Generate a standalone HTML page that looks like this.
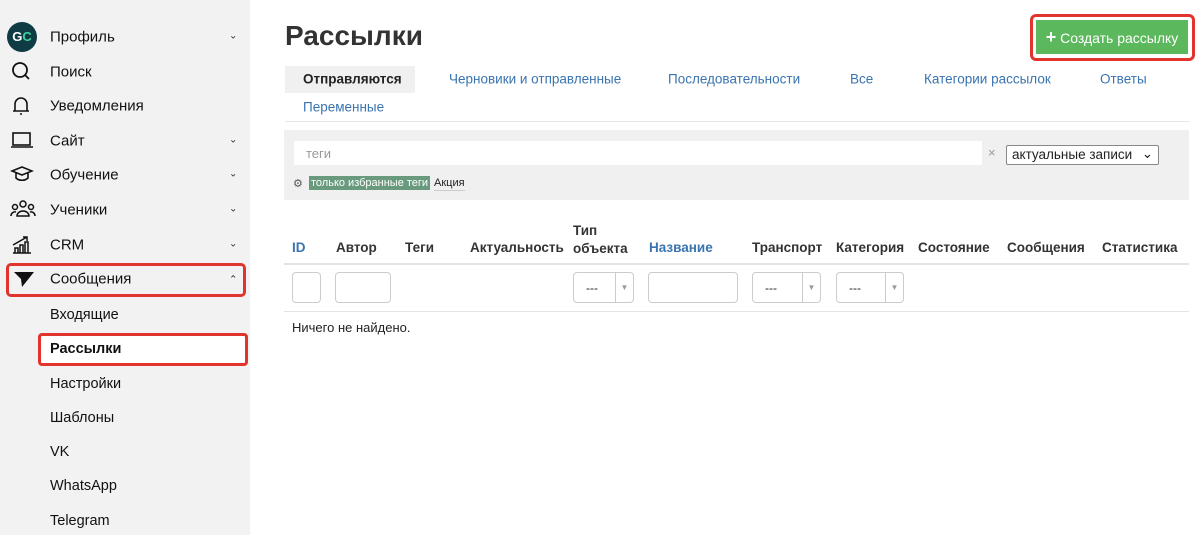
<!DOCTYPE html>
<html><head><meta charset="utf-8"><style>
*{box-sizing:border-box;margin:0;padding:0}
body{width:1200px;height:535px;overflow:hidden;font-family:"Liberation Sans",sans-serif;background:#fff;position:relative;color:#222}
.sb{position:absolute;left:0;top:0;width:250px;height:535px;background:#f2f2f2}
.it{position:absolute;left:50px;font-size:15px;color:#111;transform:translateY(-45%)}
.ic{position:absolute;left:10px;transform:translateY(-50%)}
.ch{position:absolute;left:229px;font-size:10px;color:#333;transform:translateY(-50%)}
.sub{position:absolute;left:50px;font-size:14.5px;color:#111;transform:translateY(-45%)}
.a{position:absolute;white-space:nowrap}
.tab{position:absolute;font-size:13.5px;color:#3a74b0;transform:translateY(-50%)}
.th{position:absolute;font-size:13.5px;font-weight:bold;color:#333;top:240px}
.inp{position:absolute;top:272px;height:31px;border:1px solid #ccc;border-radius:4px;background:#fff}
.sel{position:absolute;top:272px;height:31px;border:1px solid #ccc;border-radius:4px;background:#fff;font-size:12px}
.sel span{position:absolute;left:12px;top:8px}
.sel i{position:absolute;right:0;top:0;width:18px;height:29px;border-left:1px solid #ccc;font-style:normal;color:#999;font-size:8px;text-align:center;line-height:29px}
</style></head><body>
<div class="sb">
<div style="position:absolute;left:7px;top:22px;width:30px;height:30px;border-radius:50%;background:#0f3b44;color:#fff;font-weight:bold;font-size:13px;line-height:30px;text-align:center">G<span style="color:#3fd0a0">C</span></div>
<div class="it" style="top:36px">Профиль</div><div class="ch" style="top:36px">⌄</div>
<svg class="ic" style="top:71px" width="22" height="22" viewBox="0 0 22 22"><circle cx="10" cy="10" r="7" fill="none" stroke="#111" stroke-width="1.8"/><path d="M15 15l4 4" stroke="#111" stroke-width="1.8"/></svg>
<div class="it" style="top:71px">Поиск</div>
<svg class="ic" style="top:105px" width="22" height="22" viewBox="0 0 22 22"><path d="M5 17V10a6 6 0 0 1 12 0v7M3 17h16M10 20h2" fill="none" stroke="#111" stroke-width="1.6"/></svg>
<div class="it" style="top:105px">Уведомления</div>
<svg class="ic" style="top:140px" width="24" height="22" viewBox="0 0 24 22"><rect x="3" y="4" width="17" height="12" fill="none" stroke="#111" stroke-width="1.6"/><path d="M1 18h22" stroke="#111" stroke-width="1.6"/></svg>
<div class="it" style="top:140px">Сайт</div><div class="ch" style="top:140px">⌄</div>
<svg class="ic" style="top:174px" width="24" height="22" viewBox="0 0 24 22"><path d="M2 8l10-4 10 4-10 4zM6 10v5c3 3 9 3 12 0v-5" fill="none" stroke="#111" stroke-width="1.6"/></svg>
<div class="it" style="top:174px">Обучение</div><div class="ch" style="top:174px">⌄</div>
<svg class="ic" style="top:209px" width="26" height="22" viewBox="0 0 26 22"><circle cx="13" cy="6" r="3" fill="none" stroke="#111" stroke-width="1.5"/><circle cx="5" cy="9" r="2.5" fill="none" stroke="#111" stroke-width="1.5"/><circle cx="21" cy="9" r="2.5" fill="none" stroke="#111" stroke-width="1.5"/><path d="M7 18a6 5 0 0 1 12 0zM1 18a4 4 0 0 1 5-4M25 18a4 4 0 0 0-5-4" fill="none" stroke="#111" stroke-width="1.5"/></svg>
<div class="it" style="top:209px">Ученики</div><div class="ch" style="top:209px">⌄</div>
<svg class="ic" style="top:244px" width="24" height="22" viewBox="0 0 24 22"><path d="M3 20h18M5 20v-5h3v5M10 20v-8h3v8M15 20v-11h3v11M3 12l14-8M13 4h4v4" fill="none" stroke="#111" stroke-width="1.5"/></svg>
<div class="it" style="top:244px">CRM</div><div class="ch" style="top:244px">⌄</div>
<div style="position:absolute;left:6px;top:263px;width:240px;height:34px;border:3px solid #e0342c;border-radius:5px"></div>
<svg class="ic" style="top:279px;left:13px" width="22" height="20" viewBox="0 0 22 20"><path d="M1 3h20L9 18 8 10z" fill="#111"/></svg>
<div class="it" style="top:278px">Сообщения</div><div class="ch" style="top:280px">⌃</div>
<div class="sub" style="top:314px">Входящие</div>
<div style="position:absolute;left:38px;top:333px;width:210px;height:33px;border:3px solid #e0342c;border-radius:4px;background:#fff"></div>
<div class="sub" style="top:348px;font-weight:bold">Рассылки</div>
<div class="sub" style="top:383px">Настройки</div>
<div class="sub" style="top:417px">Шаблоны</div>
<div class="sub" style="top:451px">VK</div>
<div class="sub" style="top:485px">WhatsApp</div>
<div class="sub" style="top:520px">Telegram</div>
</div>

<div class="a" style="left:285px;top:20px;font-size:28px;font-weight:bold;color:#333">Рассылки</div>
<div class="a" style="left:1030px;top:14px;width:165px;height:47px;border:3px solid #e0342c;border-radius:6px"></div>
<div class="a" style="left:1036px;top:20px;width:152px;height:34px;background:#5cb85c;color:#fff;font-size:14px;line-height:34px;text-align:center"><b style="font-size:18px">+</b> Создать рассылку</div>

<div class="a" style="left:285px;top:66px;width:130px;height:27px;background:#f0f0f0"></div>
<div class="tab" style="left:303px;top:79px;color:#222;font-weight:bold">Отправляются</div>
<div class="tab" style="left:449px;top:79px">Черновики и отправленные</div>
<div class="tab" style="left:668px;top:79px">Последовательности</div>
<div class="tab" style="left:850px;top:79px">Все</div>
<div class="tab" style="left:924px;top:79px">Категории рассылок</div>
<div class="tab" style="left:1100px;top:79px">Ответы</div>
<div class="tab" style="left:303px;top:107px">Переменные</div>
<div class="a" style="left:285px;top:121px;width:905px;height:1px;background:#e8e8e8"></div>

<div class="a" style="left:284px;top:130px;width:905px;height:70px;background:#f0f0f0"></div>
<div class="a" style="left:294px;top:141px;width:688px;height:24px;background:#fff;font-size:13px;color:#999;padding:5px 12px">теги</div>
<div class="a" style="left:988px;top:145px;font-size:13px;color:#999">×</div>
<div class="a" style="left:1006px;top:145px;width:153px;height:20px;background:#fff;border:1px solid #888;border-radius:2px;font-size:13.5px;padding:1px 5px">актуальные записи<span style="position:absolute;right:5px;top:0">⌄</span></div>
<div class="a" style="left:293px;top:177px;font-size:11px;color:#555">⚙</div>
<div class="a" style="left:309px;top:176px;background:#6a9a7e;color:#fff;font-size:11px;padding:0 2px;height:14px;line-height:14px">только избранные теги</div>
<div class="a" style="left:434px;top:176px;font-size:11px;color:#222;border-bottom:1px solid #ccc;line-height:14px">Акция</div>

<div class="th" style="left:292px;color:#3a74b0">ID</div>
<div class="th" style="left:336px">Автор</div>
<div class="th" style="left:405px">Теги</div>
<div class="th" style="left:470px">Актуальность</div>
<div class="th" style="left:573px;top:222px;line-height:18px">Тип<br>объекта</div>
<div class="th" style="left:649px;color:#3a74b0">Название</div>
<div class="th" style="left:752px">Транспорт</div>
<div class="th" style="left:836px">Категория</div>
<div class="th" style="left:918px">Состояние</div>
<div class="th" style="left:1007px">Сообщения</div>
<div class="th" style="left:1102px">Статистика</div>
<div class="a" style="left:284px;top:263px;width:905px;height:2px;background:#e4e4e4"></div>
<div class="inp" style="left:292px;width:29px"></div>
<div class="inp" style="left:335px;width:56px"></div>
<div class="sel" style="left:573px;width:61px"><span>---</span><i>▼</i></div>
<div class="inp" style="left:648px;width:90px"></div>
<div class="sel" style="left:752px;width:69px"><span>---</span><i>▼</i></div>
<div class="sel" style="left:836px;width:68px"><span>---</span><i>▼</i></div>
<div class="a" style="left:284px;top:311px;width:905px;height:1px;background:#e4e4e4"></div>
<div class="a" style="left:292px;top:320px;font-size:13px;color:#222">Ничего не найдено.</div>
</body></html>
